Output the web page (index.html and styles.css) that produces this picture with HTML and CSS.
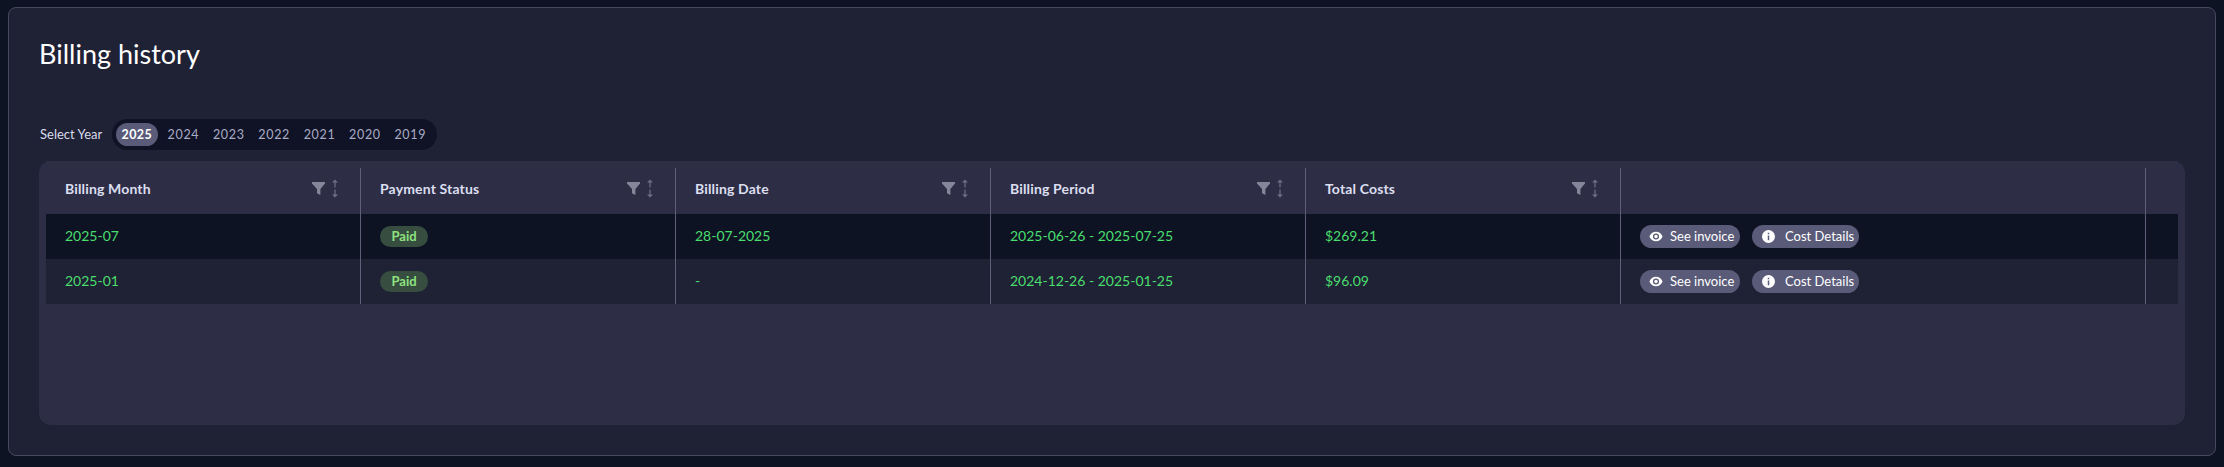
FILE: index.html
```html
<!DOCTYPE html>
<html lang="en">
<head>
<meta charset="utf-8">
<title>Billing history</title>
<link rel="stylesheet" href="styles.css">
</head>
<body>
<svg class="defs" width="0" height="0" aria-hidden="true">
  <symbol id="funnel" viewBox="0 0 13 13"><path d="M0 0h13v1.600L8.400 7V13L5 11.200V7L0 1.600z"/></symbol>
  <symbol id="sort" viewBox="0 0 8 19"><path d="M4 0.500 7 3.600H4.600V8.500H3.400V3.600H1zM4 18.500 1 15.400H3.400V10.500H4.600V15.400H7z"/></symbol>
  <symbol id="eye" viewBox="0 0 16 12"><path fill-rule="evenodd" d="M8 .5C4.600.5 1.700 2.600.5 6c1.200 3.400 4.100 5.500 7.500 5.500s6.300-2.100 7.500-5.500C14.300 2.600 11.400.5 8 .5zM8 9.500a3.500 3.500 0 1 1 0-7 3.500 3.500 0 0 1 0 7zM8 4a2 2 0 1 0 0 4 2 2 0 0 0 0-4z"/></symbol>
  <symbol id="info" viewBox="0 0 14 14"><path fill-rule="evenodd" d="M7 0a7 7 0 1 1 0 14A7 7 0 0 1 7 0zM6.200 3v1.700h1.600V3zM6.200 6v5h1.600V6z"/></symbol>
</svg>
<main class="card">
  <h1 class="title">Billing history</h1>
  <div class="year-row">
    <span class="year-label">Select Year</span>
    <div class="years">
      <span class="year active">2025</span>
      <span class="year">2024</span>
      <span class="year">2023</span>
      <span class="year">2022</span>
      <span class="year">2021</span>
      <span class="year">2020</span>
      <span class="year">2019</span>
    </div>
  </div>
  <section class="table-wrap">
    <div class="table">
      <div class="cell head"><span class="head-text">Billing Month</span><span class="tools"><svg class="i-funnel"><use href="#funnel"/></svg><svg class="i-sort"><use href="#sort"/></svg></span></div>
      <div class="cell head"><span class="head-text">Payment Status</span><span class="tools"><svg class="i-funnel"><use href="#funnel"/></svg><svg class="i-sort"><use href="#sort"/></svg></span></div>
      <div class="cell head"><span class="head-text">Billing Date</span><span class="tools"><svg class="i-funnel"><use href="#funnel"/></svg><svg class="i-sort"><use href="#sort"/></svg></span></div>
      <div class="cell head"><span class="head-text">Billing Period</span><span class="tools"><svg class="i-funnel"><use href="#funnel"/></svg><svg class="i-sort"><use href="#sort"/></svg></span></div>
      <div class="cell head"><span class="head-text">Total Costs</span><span class="tools"><svg class="i-funnel"><use href="#funnel"/></svg><svg class="i-sort"><use href="#sort"/></svg></span></div>
      <div class="cell head"></div>
      <div class="cell head last"></div>

      <div class="cell dark">2025-07</div>
      <div class="cell dark badge-cell"><span class="badge">Paid</span></div>
      <div class="cell dark">28-07-2025</div>
      <div class="cell dark">2025-06-26 - 2025-07-25</div>
      <div class="cell dark">$269.21</div>
      <div class="cell dark actions"><span class="btn btn-invoice"><svg class="i-eye"><use href="#eye"/></svg><span class="btn-text">See invoice</span></span><span class="btn btn-cost"><svg class="i-info"><use href="#info"/></svg><span class="btn-text">Cost Details</span></span></div>
      <div class="cell dark last"></div>

      <div class="cell">2025-01</div>
      <div class="cell badge-cell"><span class="badge">Paid</span></div>
      <div class="cell">-</div>
      <div class="cell">2024-12-26 - 2025-01-25</div>
      <div class="cell">$96.09</div>
      <div class="cell actions"><span class="btn btn-invoice"><svg class="i-eye"><use href="#eye"/></svg><span class="btn-text">See invoice</span></span><span class="btn btn-cost"><svg class="i-info"><use href="#info"/></svg><span class="btn-text">Cost Details</span></span></div>
      <div class="cell last"></div>
    </div>
  </section>
</main>
</body>
</html>
```

FILE: styles.css
```css
* { box-sizing: border-box; }
html, body { margin: 0; height: 467px; overflow: hidden; }
body {
  background: #0e1324;
  padding: 7px 8px 11px;
  font-family: "Lato", "Inter", sans-serif;
  color: #fff;
}
.defs { position: absolute; }
.card {
  height: 449px;
  width: 2208px;
  background: #1f2135;
  border: 1px solid #47485e;
  border-radius: 8px;
  padding: 28px 30px 29px 30px;
}
.title {
  margin: 0;
  font-size: 27px;
  line-height: 36px;
  font-weight: 400;
  color: #fff;
}
.year-row {
  display: flex;
  align-items: center;
  margin-top: 47px;
  height: 31px;
}
.year-label { font-size: 13px; color: #d9dbec; width: 73px; padding: 0 0 1px 1px; white-space: nowrap; }
.years {
  display: flex;
  align-items: center;
  height: 31px;
  width: 325px;
  padding: 0 4px;
  background: #101325;
  border-radius: 16px;
}
.year {
  width: 45.7px;
  text-align: center;
  font-size: 12.500px;
  letter-spacing: .7px;
  color: #a9abc6;
  line-height: 23px;
}
.year.active {
  width: 42px;
  margin-right: 3px;
  background: #5a5b78;
  border-radius: 12px;
  color: #fff;
  font-weight: 700;
  letter-spacing: .4px;
}
.table-wrap {
  margin-top: 11px;
  height: 264px;
  background: #2d2e45;
  border-radius: 12px;
  padding: 0 7px;
}
.table {
  display: grid;
  grid-template-columns: repeat(5, 315px) 525px 32px;
  grid-template-rows: 53px 45px 45px;
}
.cell {
  display: flex;
  align-items: center;
  padding: 0 0 2px 19px;
  font-size: 14px;
  color: #4ade6d;
  background: #1f2135;
  border-right: 1px solid #5e5f78;
}
.cell.dark { background: #0e1324; }
.cell.head {
  position: relative;
  background: #2d2e45;
  border-right: 0;
  justify-content: space-between;
  padding: 2px 22px 0 19px;
  color: #dcdef0;
}
.cell.head:not(.last)::after {
  content: "";
  position: absolute;
  right: 0;
  top: 7px;
  bottom: 0;
  width: 1px;
  background: #5e5f78;
}
.cell.last, .cell.head.last { border-right: 0; padding: 0; }
.head-text { font-weight: 700; font-size: 14px; letter-spacing: .15px; white-space: nowrap; }
.tools { display: flex; align-items: center; gap: 6px; }
.i-funnel { width: 13px; height: 13px; fill: #85869a; }
.i-sort { width: 8px; height: 19px; fill: #6e6f86; }
.cell.badge-cell { padding-bottom: 0; }
.badge {
  width: 48px;
  height: 21px;
  line-height: 20px;
  text-align: center;
  border-radius: 11px;
  background: #364d40;
  color: #8ee27f;
  font-size: 13px;
  font-weight: 700;
}
.actions { gap: 12px; padding-bottom: 0; }
.btn {
  display: flex;
  align-items: center;
  height: 23px;
  border-radius: 12px;
  background: #5a5b78;
  color: #fff;
  font-size: 13px;
  white-space: nowrap;
}
.btn-text { padding-bottom: 2px; }
.btn-invoice { width: 100px; padding-left: 9px; }
.btn-cost { width: 107px; padding-left: 10px; }
.i-eye { width: 14px; height: 11px; fill: #fff; margin-right: 7px; }
.i-info { width: 13px; height: 13px; fill: #fff; margin-right: 10px; }
```
